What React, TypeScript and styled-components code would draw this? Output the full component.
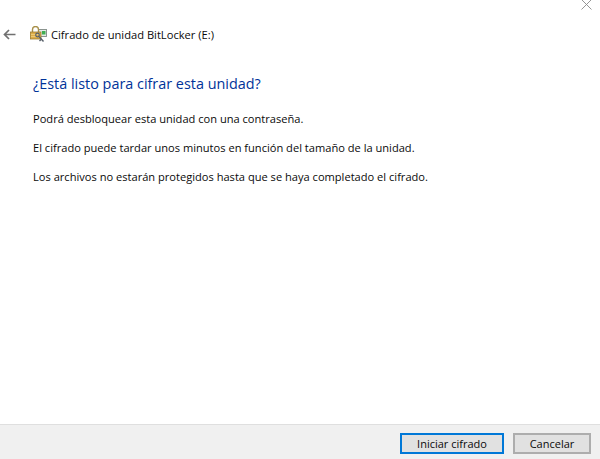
import React from "react";
import styled, { createGlobalStyle } from "styled-components";

const Global = createGlobalStyle`
  html, body { margin: 0; padding: 0; background: #fff; }
  body { font-family: "Open Sans", "Noto Sans", "Liberation Sans", sans-serif; }
`;
const Page = styled.div`
  position: relative;
  width: 600px;
  height: 459px;
  display: flex;
  flex-direction: column;
  overflow: hidden;
  background: #fff;
`;
const CloseIcon = styled.svg`
  position: absolute;
  top: 0;
  right: 8px;
  width: 11px;
  height: 10px;
`;
const Header = styled.header`
  display: flex;
  align-items: center;
  height: 22px;
  margin-top: 24px;
  padding-left: 3px;
`;
const BackIcon = styled.svg`
  width: 13px;
  height: 11px;
  margin-right: 14px;
  margin-bottom: 2px;
`;
const AppIcon = styled.svg`
  width: 17px;
  height: 16px;
  margin-right: 4px;
  margin-bottom: 2px;
`;
const Title = styled.span`
  font-size: 11.15px;
  color: #0a0a0a;
  line-height: 22px;
`;
const Content = styled.main`
  flex: 1;
  padding: 27px 0 0 33px;
  display: flex;
  flex-direction: column;
`;
const Heading = styled.h1`
  margin: 0 0 15px;
  font-size: 14.4px;
  font-weight: 400;
  line-height: 22px;
  color: #003399;
`;
const Para = styled.p`
  margin: 0 0 11px;
  font-size: 11.1px;
  line-height: 18px;
  color: #0a0a0a;
`;
const Footer = styled.footer`
  height: 35px;
  flex: none;
  box-sizing: border-box;
  border-top: 1px solid #dfdfdf;
  background: #f0f0f0;
  display: flex;
  justify-content: flex-end;
  align-items: flex-start;
  gap: 9px;
  padding: 8px 9px 0 0;
`;
const Button = styled.button<{ $primary?: boolean; $w: number }>`
  width: ${(p) => p.$w}px;
  height: 21px;
  box-sizing: border-box;
  padding: 0;
  background: #e1e1e1;
  border: ${(p) => (p.$primary ? "2px solid #0078d7" : "2px solid #adadad")};
  font-family: inherit;
  font-size: 11px;
  color: #0a0a0a;
  line-height: 16px;
`;

export default function App() {
  return (
    <Page>
      <Global />
      <CloseIcon viewBox="0 0 11 10">
        <path d="M0.5 -0.5L10.5 9.5M10.5 -0.5L0.5 9.5" stroke="#8a8a8a" strokeWidth="0.9" fill="none" />
      </CloseIcon>
      <Header>
        <BackIcon viewBox="0 0 13 11">
          <path d="M12.5 5.5H1.5M6 1L1.5 5.5L6 10" stroke="#707070" strokeWidth="1.7" fill="none" />
        </BackIcon>
        <AppIcon viewBox="0 0 17 16">
          <rect x="8.5" y="3.5" width="8" height="7" fill="#e4ebe7" stroke="#7f8a85" strokeWidth="0.9" />
          <rect x="12" y="5" width="3.5" height="3.5" fill="#3fae52" />
          <path d="M2.5 6V3.5a3 3 0 0 1 6 0V6" stroke="#a8904a" strokeWidth="1.4" fill="none" />
          <rect x="0.5" y="6" width="10.5" height="7" fill="#dfae48" stroke="#9a7c30" strokeWidth="0.8" />
          <path d="M1 8.5h9M1 10.5h9" stroke="#f0d48c" strokeWidth="0.7" />
          <circle cx="7.5" cy="9" r="1.8" fill="none" stroke="#57606a" strokeWidth="1.2" />
          <path d="M9 10.5l4.5 5M11.5 13l-2 2" stroke="#57606a" strokeWidth="1.4" fill="none" />
        </AppIcon>
        <Title>Cifrado de unidad BitLocker (E:)</Title>
      </Header>
      <Content>
        <Heading>¿Está listo para cifrar esta unidad?</Heading>
        <Para>Podrá desbloquear esta unidad con una contraseña.</Para>
        <Para>El cifrado puede tardar unos minutos en función del tamaño de la unidad.</Para>
        <Para>Los archivos no estarán protegidos hasta que se haya completado el cifrado.</Para>
      </Content>
      <Footer>
        <Button $primary $w={104}>Iniciar cifrado</Button>
        <Button $w={78}>Cancelar</Button>
      </Footer>
    </Page>
  );
}
